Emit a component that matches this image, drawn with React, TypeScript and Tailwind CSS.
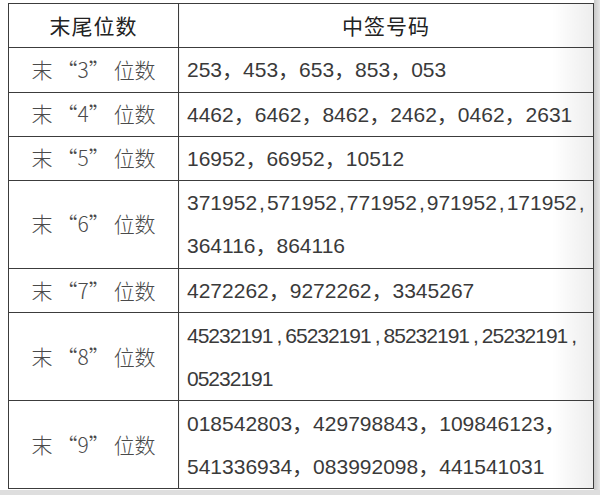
import React from "react";

type Line = { text: string; kind?: "full" | "half" | "tight" };

interface Row {
  digit: string;
  height: string;
  lines: Line[];
}

const ROWS: Row[] = [
  { digit: "3", height: "h-[44.5px]", lines: [{ text: "253，453，653，853，053" }] },
  { digit: "4", height: "h-[43.5px]", lines: [{ text: "4462，6462，8462，2462，0462，2631" }] },
  { digit: "5", height: "h-[43.5px]", lines: [{ text: "16952，66952，10512" }] },
  {
    digit: "6",
    height: "h-[88px]",
    lines: [
      { text: "371952,571952,771952,971952,171952,", kind: "half" },
      { text: "364116，864116" },
    ],
  },
  { digit: "7", height: "h-[44.5px]", lines: [{ text: "4272262，9272262，3345267" }] },
  {
    digit: "8",
    height: "h-[88px]",
    lines: [
      { text: "45232191,65232191,85232191,25232191,", kind: "tight" },
      { text: "05232191", kind: "tight" },
    ],
  },
  {
    digit: "9",
    height: "h-[88px]",
    lines: [
      { text: "018542803，429798843，109846123，" },
      { text: "541336934，083992098，441541031" },
    ],
  },
];

function NumberLine({ line }: { line: Line }) {
  if (line.kind === "half" || line.kind === "tight") {
    const parts = line.text.split(",");
    return (
      <div
        className={`leading-[43px] whitespace-nowrap ${
          line.kind === "tight" ? "tracking-[-1px]" : ""
        }`}
      >
        {parts.map((p, i) => (
          <React.Fragment key={i}>
            {p}
            {i < parts.length - 1 && (
              <span className={line.kind === "tight" ? "mx-[4px]" : "mx-[2px]"}>,</span>
            )}
          </React.Fragment>
        ))}
      </div>
    );
  }
  return <div className="leading-[43px] whitespace-nowrap">{line.text}</div>;
}

export default function App() {
  return (
    <div className="w-[600px] h-[495px] flex flex-col bg-white overflow-hidden">
      <div className="flex flex-1">
        <div className="pl-[8px] pt-[3px]">
          <table className="table-fixed border-collapse w-[585px] text-[#383838]">
            <colgroup>
              <col className="w-[170px]" />
              <col className="w-[415px]" />
            </colgroup>
            <thead>
              <tr className="h-[44px]">
                <th className="border-[1.5px] border-[#3c3c3c] font-normal text-[21px] tracking-[1px] text-[#222] font-['Noto_Sans_CJK_SC',sans-serif] align-middle">
                  末尾位数
                </th>
                <th className="border-[1.5px] border-[#3c3c3c] font-normal text-[21px] tracking-[1px] text-[#222] font-['Noto_Sans_CJK_SC',sans-serif] align-middle bg-[linear-gradient(to_right,#ffffff_90%,#ededed)]">
                  中签号码
                </th>
              </tr>
            </thead>
            <tbody>
              {ROWS.map((row) => (
                <tr key={row.digit} className={row.height}>
                  <td className="border-[1.5px] border-[#3c3c3c] text-center align-middle text-[21px] font-light text-[#4a4a4a] font-['Noto_Sans_CJK_SC',sans-serif]">
                    末<span className="mx-[4px]">“{row.digit}”</span>位数
                  </td>
                  <td className="border-[1.5px] border-[#3c3c3c] pl-[8px] align-middle text-[21px] text-[#3a3a3a] font-['Liberation_Sans','Noto_Sans_CJK_SC',sans-serif] bg-[linear-gradient(to_right,#ffffff_90%,#ededed)]">
                    {row.lines.map((l, i) => (
                      <NumberLine key={i} line={l} />
                    ))}
                  </td>
                </tr>
              ))}
            </tbody>
          </table>
        </div>
        <div className="flex-1 bg-[linear-gradient(to_right,#c9c9c9,#e6e6e6)]" />
      </div>
      <div className="h-[5px] bg-[#dedede]" />
    </div>
  );
}
